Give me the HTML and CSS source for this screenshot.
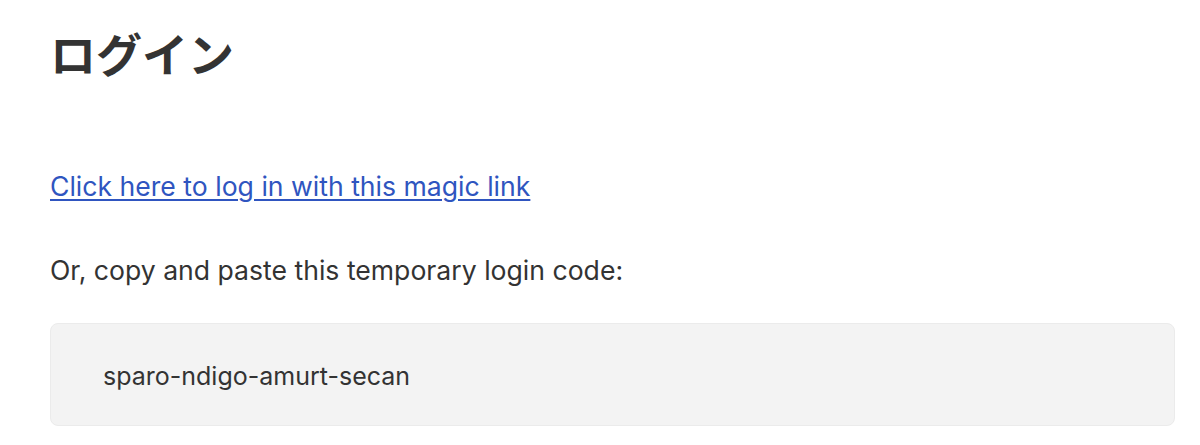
FILE: index.html
```html
<!DOCTYPE html>
<html lang="ja">
<head>
<meta charset="utf-8">
<link rel="stylesheet" href="styles.css">
</head>
<body>
<main class="page">
  <h1 class="title">ログイン</h1>
  <p class="link-row"><a class="magic" href="#">Click here to log in with this magic link</a></p>
  <p class="hint">Or, copy and paste this temporary login code:</p>
  <div class="code-box"><span class="code">sparo-ndigo-amurt-secan</span></div>
</main>
</body>
</html>
```
FILE: styles.css
```css
html, body { margin: 0; padding: 0; background: #fff; }
body { font-family: Inter, "Noto Sans CJK JP", sans-serif; color: #333; }
.page { padding: 22px 25px 0 50px; }
.title { margin: 0; font-size: 46px; font-weight: 700; line-height: 60px; font-family: "Noto Sans CJK JP", sans-serif; color: #333; }
.link-row { margin: 88px 0 0; font-size: 26.6px; line-height: 32px; }
.magic { color: #2f55c0; text-decoration: underline; text-underline-offset: 3px; text-decoration-thickness: 2px; }
.hint { margin: 52px 0 0; font-size: 26.6px; line-height: 32px; }
.code-box { margin-top: 37px; background: #f3f3f3; border: 1px solid #ebebeb; border-radius: 8px; padding: 36px 52px 33px; }
.code { display: block; font-size: 25px; line-height: 32px; }
```
